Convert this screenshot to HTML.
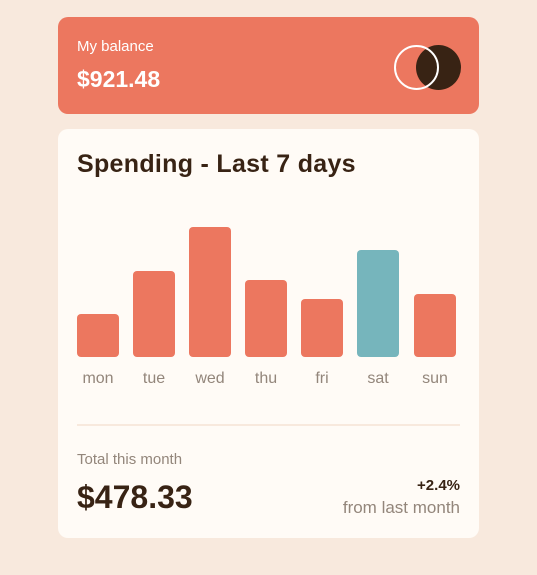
<!DOCTYPE html>
<html><head><meta charset="utf-8"><style>
*{margin:0;padding:0;box-sizing:border-box}
body{width:537px;height:575px;background:#f8e9dd;font-family:"Liberation Sans",sans-serif;position:relative;overflow:hidden}
.top{position:absolute;left:58px;top:17px;width:421px;height:97px;background:#ec775f;border-radius:10px;color:#fff}
.top .l{position:absolute;left:19px;top:21px;font-size:15px}
.top .v{position:absolute;left:19px;top:49px;font-size:23px;font-weight:bold}
.c2{position:absolute;left:358px;top:28px;width:45px;height:45px;background:#382314;border-radius:50%}
.c1b{position:absolute;left:336px;top:28px;width:45px;height:45px;border:2px solid #fff;border-radius:50%;z-index:2}
.card{position:absolute;left:58px;top:129px;width:421px;height:409px;background:#fffbf6;border-radius:10px}
h1{position:absolute;left:19px;top:21px;font-size:25px;letter-spacing:0.3px;color:#382314;font-weight:bold}
.bar{position:absolute;width:42px;background:#ec775f;border-radius:4px}
.lab{position:absolute;top:241px;left:0;width:42px;text-align:center;font-size:16px;color:#93867b}
.hr{position:absolute;left:19px;right:19px;top:295px;height:2px;background:#f8e9dd}
.t1{position:absolute;left:19px;top:322px;font-size:15px;color:#93867b}
.t2{position:absolute;left:19px;top:350px;font-size:32px;font-weight:bold;color:#382314}
.p{position:absolute;right:19px;top:348px;font-size:15px;font-weight:bold;color:#382314}
.f{position:absolute;right:19px;top:369px;font-size:17px;color:#93867b}
</style></head><body>
<div class="top"><div class="l">My balance</div><div class="v">$921.48</div><div class="c2"></div><div class="c1b"></div></div>
<div class="card">
<h1>Spending - Last 7 days</h1>
<div class="bar" style="left:19px;top:185px;height:43px"></div>
<div class="bar" style="left:75px;top:142px;height:86px"></div>
<div class="bar" style="left:131px;top:98px;height:130px"></div>
<div class="bar" style="left:187px;top:151px;height:77px"></div>
<div class="bar" style="left:243px;top:170px;height:58px"></div>
<div class="bar" style="left:299px;top:121px;height:107px;background:#76b5bc"></div>
<div class="bar" style="left:356px;top:165px;height:63px"></div>
<div class="lab" style="left:19px">mon</div>
<div class="lab" style="left:75px">tue</div>
<div class="lab" style="left:131px">wed</div>
<div class="lab" style="left:187px">thu</div>
<div class="lab" style="left:243px">fri</div>
<div class="lab" style="left:299px">sat</div>
<div class="lab" style="left:356px">sun</div>
<div class="hr"></div>
<div class="t1">Total this month</div>
<div class="t2">$478.33</div>
<div class="p">+2.4%</div>
<div class="f">from last month</div>
</div>
</body></html>
